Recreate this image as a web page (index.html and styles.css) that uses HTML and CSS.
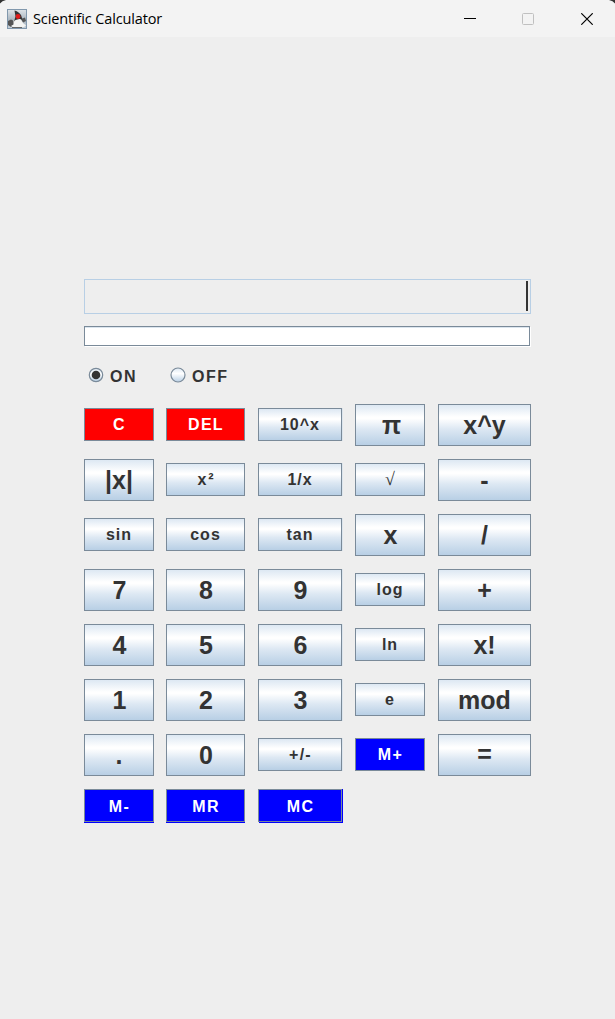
FILE: index.html
```html
<!DOCTYPE html>
<html lang="en">
<head>
<meta charset="utf-8">
<title>Scientific Calculator</title>
<link rel="stylesheet" href="styles.css">
</head>
<body>
<header class="titlebar">
  <svg class="app-icon" width="20" height="20" viewBox="0 0 20 20">
    <defs><linearGradient id="bg" x1="0" y1="0" x2="0" y2="1"><stop offset="0" stop-color="#dfe4e8"/><stop offset=".55" stop-color="#aab5bf"/><stop offset="1" stop-color="#c6d0d9"/></linearGradient></defs>
    <rect x=".5" y=".5" width="19" height="19" fill="url(#bg)" stroke="#8198ad"/>
    <path d="M1 12 4 10.500 7 12v4L4 18 1 16z" fill="#555"/>
    <path d="M14 10 18 8.500l1 3.500-3 1.500z" fill="#555"/>
    <path d="M6.500 11.500 9 10l4.500 0 2.500 4 3 2.500-2 1.500-10 .5-3-1.500 2.500-1.500z" fill="#f4f4f2"/>
    <path d="M7.500 1.500Q11 2 14 6l1.500 4.500-3-.5-4 1-1.500 1.500 1.500-5z" fill="#353535"/>
    <circle cx="11" cy="7.500" r="2.400" fill="#e21b1b"/>
    <path d="M5 18.500h10" stroke="#666"/>
  </svg>
  <span class="title">Scientific Calculator</span>
  <div class="window-controls">
    <svg width="12" height="12" viewBox="0 0 12 12"><path d="M0 5.500h12" stroke="#000"/></svg>
    <svg width="12" height="12" viewBox="0 0 12 12"><rect x=".5" y=".5" width="11" height="11" rx="1" fill="none" stroke="#c0c0c0"/></svg>
    <svg width="12" height="12" viewBox="0 0 12 12"><path d="M.3.3l11.400 11.400M11.700.3.3 11.700" stroke="#000" stroke-width="1.200"/></svg>
  </div>
  <svg class="corner corner-left" width="6" height="4" viewBox="0 0 6 4"><path d="M0 0h6Q2 .5 0 3.500z" fill="#333"/></svg>
  <svg class="corner corner-right" width="6" height="4" viewBox="0 0 6 4"><path d="M6 0H0q4 .5 6 3.500z" fill="#333"/></svg>
</header>
<main class="calculator">
  <div class="display"><span class="caret"></span></div>
  <div class="entry"></div>
  <div class="power">
    <div class="option"><svg width="16" height="16" viewBox="0 0 16 16"><defs><linearGradient id="radio" x1="0" y1="0" x2="0" y2="1"><stop offset="0" stop-color="#dde8f3"/><stop offset=".4" stop-color="#fff"/><stop offset="1" stop-color="#b8cfe5"/></linearGradient></defs><circle cx="8" cy="8" r="6.700" fill="url(#radio)" stroke="#7a8a99" stroke-width="1.200"/><circle cx="8" cy="8" r="4.300" fill="#333"/></svg><span>ON</span></div>
    <div class="option"><svg width="16" height="16" viewBox="0 0 16 16"><circle cx="8" cy="8" r="7" fill="url(#radio)" stroke="#7a8a99" stroke-width="1.200"/></svg><span>OFF</span></div>
  </div>
  <div class="keys">
    <div class="key small red">C</div><div class="key small red">DEL</div><div class="key small wide lower">10^x</div><div class="key pi">π</div><div class="key">x^y</div>
    <div class="key">|x|</div><div class="key small square">x²</div><div class="key small wide lower">1/x</div><div class="key small root">√</div><div class="key">-</div>
    <div class="key small lower">sin</div><div class="key small lower">cos</div><div class="key small wide lower">tan</div><div class="key nudge">x</div><div class="key">/</div>
    <div class="key nudge">7</div><div class="key nudge">8</div><div class="key wide nudge">9</div><div class="key small lower">log</div><div class="key">+</div>
    <div class="key nudge">4</div><div class="key nudge">5</div><div class="key wide nudge">6</div><div class="key small lower">ln</div><div class="key">x!</div>
    <div class="key nudge">1</div><div class="key nudge">2</div><div class="key wide nudge">3</div><div class="key small lower">e</div><div class="key">mod</div>
    <div class="key">.</div><div class="key nudge">0</div><div class="key small wide">+/-</div><div class="key small blue">M+</div><div class="key equals">=</div>
    <div class="key small blue last">M-</div><div class="key small blue last">MR</div><div class="key small blue wide last">MC</div>
  </div>
</main>
</body>
</html>
```
FILE: styles.css
```css
* { box-sizing: border-box; }
body {
  margin: 0;
  height: 1019px;
  overflow: hidden;
  background: #eee;
  color: #333;
  font-family: "Liberation Sans", Arial, sans-serif;
}
.titlebar {
  position: relative;
  display: flex;
  align-items: center;
  height: 37px;
  padding: 0 22px 0 7px;
  background: #f3f3f3;
}
.app-icon { margin-right: 6px; }
.title {
  color: #000;
  font: 14.5px/20px "Open Sans", sans-serif;
  letter-spacing: -0.13px;
}
.window-controls { display: flex; margin-left: auto; }
.window-controls svg:nth-child(2) { margin: 0 47px 0 46px; }
.corner { position: absolute; top: 0; }
.corner-left { left: 0; }
.corner-right { right: 0; }
.calculator { width: 447px; margin: 242px 0 0 84px; }
.display {
  display: flex;
  justify-content: flex-end;
  height: 35px;
  padding: 1px 2px;
  border: 1px solid #b8cfe5;
}
.caret { width: 2px; height: 30px; background: #333; }
.entry {
  width: 446px;
  height: 20px;
  margin-top: 12px;
  border: 1px solid #7a8a99;
  background: #fff;
  box-shadow: inset 0 1px #dbe5ee, 1px 1px #fff;
}
.power {
  display: flex;
  gap: 33px;
  height: 24px;
  margin: 19px 0 15px 4px;
  font-size: 16px;
  font-weight: bold;
  letter-spacing: 1.500px;
}
.option { display: flex; gap: 6px; line-height: 24px; }
.option svg { margin-top: 2px; }
.keys {
  display: grid;
  grid-template-columns: 70px 80px 85px 71px 93px;
  grid-auto-rows: 42px;
  gap: 13px 12px;
}
.key {
  height: 42px;
  margin-right: 1px;
  border: 1px solid #7a8a99;
  background: linear-gradient(#dde8f3 0%, #fff 30%, #fff 34%, #dde8f3 60%, #b8cfe5 100%);
  font-size: 25px;
  font-weight: bold;
  line-height: 41px;
  text-align: center;
}
.key:nth-child(5n + 1), .key:nth-child(5n) { margin-right: 0; }
.nudge { padding-left: 1px; }
.pi { padding-left: 3px; }
.equals { line-height: 39px; }
.small {
  height: 33px;
  margin-top: 4px;
  padding-left: 1px;
  font-size: 16px;
  line-height: 31px;
  letter-spacing: 1.300px;
}
.lower { letter-spacing: 1px; padding-left: 0; }
.square { letter-spacing: 2px; padding-left: 2px; }
.wide { box-shadow: 1px 0 #dce5ed; }
.root { font-family: "Liberation Serif", serif; font-size: 18px; font-weight: normal; }
.red { background: #f00; color: #fff; }
.blue { background: #00f; color: #fff; }
.last { margin-top: 0; line-height: 33px; box-shadow: 0 1px #00f; }
.last.wide { box-shadow: 1px 1px #00f, 1px 0 #00f; }
```
